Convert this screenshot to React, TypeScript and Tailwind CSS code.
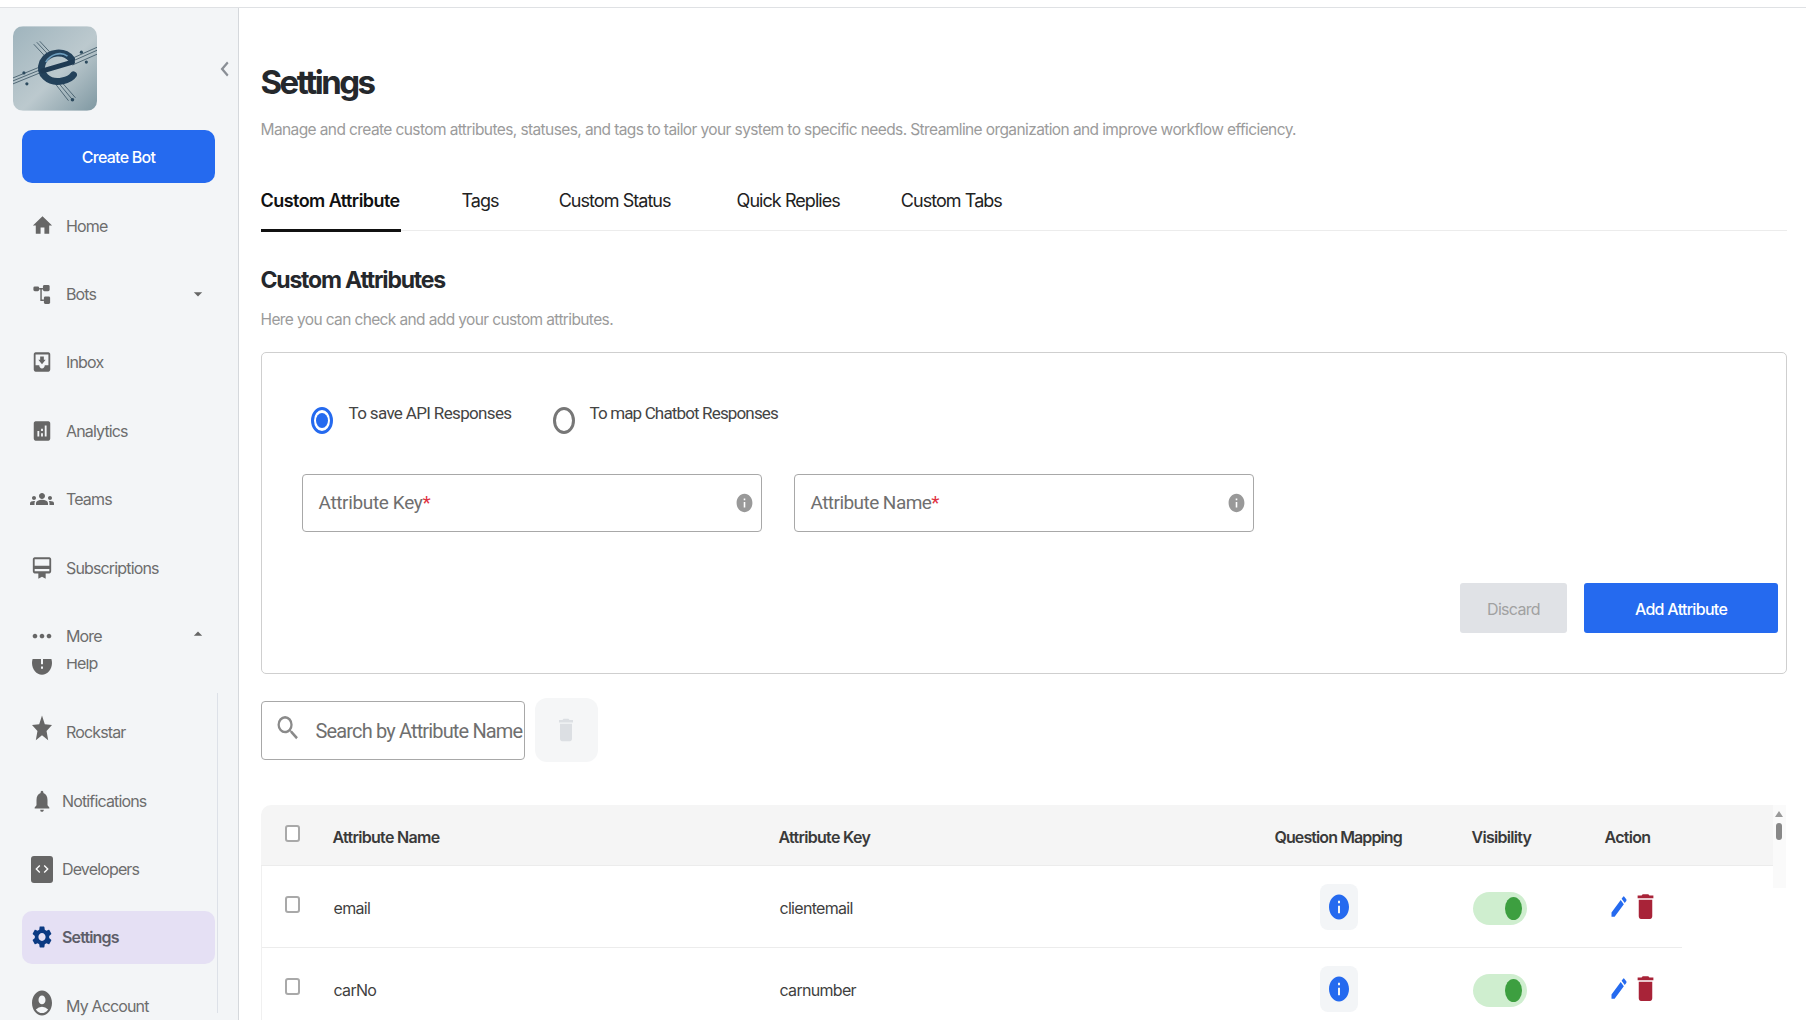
import React from 'react';
import {
  MdHome, MdMoveToInbox, MdAnalytics, MdGroups, MdCardMembership, MdMoreHoriz, MdError,
  MdStar, MdNotifications, MdSettings, MdAccountCircle, MdInfo, MdEdit, MdDelete, MdSearch, MdArrowDropDown,
  MdArrowDropUp, MdChevronLeft, MdCode,
} from 'react-icons/md';

const inter = 'font-["Inter","Liberation_Sans",sans-serif]';

const Logo = () => (
  <svg viewBox="0 0 85 85" className="w-[85px] h-[85px] rounded-[10px]">
    <defs>
      <linearGradient id="bg" x1="0" y1="0" x2="1" y2="1">
        <stop offset="0" stopColor="#9fb4bd" />
        <stop offset="0.55" stopColor="#bcc9ce" />
        <stop offset="1" stopColor="#7f98a2" />
      </linearGradient>
    </defs>
    <rect width="85" height="85" fill="url(#bg)" />
    <g stroke="#36505f" strokeWidth="0.8" fill="none">
      <path d="M24 16 L37 30 M27 15 L40 29 M21 18 L34 32" />
      <path d="M45 56 L60 74 M48 55 L63 72 M42 57 L56 75" />
      <path d="M58 36 L85 24 M58 33 L85 21 M60 39 L85 28" />
      <path d="M0 55 L27 44 M0 52 L27 41 M0 58 L27 47" />
    </g>
    <g fill="#2c4a5e">
      <circle cx="69" cy="26" r="1.6" />
      <circle cx="74" cy="36" r="1.6" />
      <circle cx="11" cy="47" r="1.6" />
      <circle cx="14" cy="58" r="1.6" />
      <circle cx="60" cy="74" r="1.8" />
    </g>
    <path d="M59 33 C52 24 36 25 30 36 C25 48 36 58 50 55 C55 54 59 52 61 49" fill="none" stroke="#23415a" strokeWidth="7" strokeLinecap="round" />
    <path d="M30 45 L60 36" stroke="#1f3a52" strokeWidth="5" strokeLinecap="round" />
    <path d="M55 30 C48 25 38 28 33 36" fill="none" stroke="#6d9dbd" strokeWidth="1.6" />
  </svg>
);

const BotsIcon = () => (
  <svg viewBox="0 0 20 22" className="w-[20px] h-[21px]" fill="#666666" stroke="#666666">
    <rect x="1" y="2.5" width="6" height="5" rx="1.5" stroke="none" />
    <rect x="11" y="1" width="7" height="6.5" rx="1.5" stroke="none" />
    <rect x="12" y="13" width="6.5" height="8" rx="1.5" stroke="none" />
    <path d="M7 5 H11 M9 5 V17 H12" fill="none" strokeWidth="1.5" />
  </svg>
);

type NavItem = {
  label: string;
  icon: React.ComponentType<any>;
  size: string;
  textMl?: string;
};

const upper: NavItem[] = [
  { label: 'Home', icon: MdHome, size: 'w-[23px] h-[25px]' },
  { label: 'Bots', icon: BotsIcon, size: '' },
  { label: 'Inbox', icon: MdMoveToInbox, size: 'w-[22px] h-[26px]' },
  { label: 'Analytics', icon: MdAnalytics, size: 'w-[22px] h-[26px]' },
  { label: 'Teams', icon: MdGroups, size: 'w-[24px] h-[24px]' },
  { label: 'Subscriptions', icon: MdCardMembership, size: 'w-[22px] h-[26px]' },
];

const SideRow = ({ item, right }: { item: NavItem; right?: React.ReactNode }) => {
  const Icon = item.icon;
  return (
    <div className="h-[68.4px] flex items-center pl-[30px] pr-[24px] shrink-0">
      <span className="w-[24px] flex justify-center text-[#666666] shrink-0">
        {item.label === 'Developers' ? (
          <span className="w-[22px] h-[27px] rounded-[3px] bg-[#666666] flex items-center justify-center">
            <MdCode className="w-[16px] h-[16px] text-white" />
          </span>
        ) : item.label === 'Bots' ? (
          <BotsIcon />
        ) : (
          <Icon className={item.size} preserveAspectRatio="none" />
        )}
      </span>
      <span className={`${item.textMl || 'ml-3'} ${inter} text-[16px] tracking-[-0.85px] text-[#6d6d6d]`}>{item.label}</span>
      {right}
    </div>
  );
};

const Sidebar = () => (
  <aside className="w-[239px] shrink-0 h-[1012px] bg-[#f3f5f7] border-r border-[#d5d8dc] flex flex-col overflow-hidden">
    <div className="flex items-center pl-[13px] pt-[18px]">
      <Logo />
      <MdChevronLeft className="ml-[115px] w-[26px] h-[30px] text-[#8a8f96]" preserveAspectRatio="none" />
    </div>
    <button className={`mt-[19px] ml-[22px] mr-[23px] h-[53px] rounded-[10px] bg-[#256aef] text-white text-[16px] font-medium tracking-[-0.75px] ${inter}`}>
      Create Bot
    </button>
    <div className="mt-[8.5px] flex flex-col">
      {upper.map((item) => (
        <SideRow
          key={item.label}
          item={item}
          right={item.label === 'Bots' ? <MdArrowDropDown className="ml-auto w-[20px] h-[20px] text-[#666666] -translate-x-[6px]" /> : undefined}
        />
      ))}
      <div className="h-[57.5px] pt-[12px] shrink-0">
        <div className="h-[44px] flex items-center pl-[30px] pr-[24px]">
          <span className="w-[24px] flex justify-center text-[#666666]">
            <MdMoreHoriz className="w-[28px] h-[28px] shrink-0" />
          </span>
          <span className={`ml-3 ${inter} text-[16px] tracking-[-0.85px] text-[#6d6d6d]`}>More</span>
          <MdArrowDropUp className="ml-auto w-[20px] h-[20px] text-[#666666] -translate-x-[6px] -translate-y-[2px]" />
        </div>
      </div>
    </div>
    <div className="relative flex-1 overflow-hidden">
      <div className="-mt-[30.7px] flex flex-col">
        <div className="mb-[1px]">
          <SideRow item={{ label: 'Help', icon: MdError, size: 'w-[26px] h-[28px]' }} />
        </div>
        <SideRow item={{ label: 'Rockstar', icon: MdStar, size: 'w-[27px] h-[31px] -translate-y-[4px]' }} />
        <SideRow item={{ label: 'Notifications', icon: MdNotifications, size: 'w-[22px] h-[26px]', textMl: 'ml-2' }} />
        <SideRow item={{ label: 'Developers', icon: MdCode, size: '', textMl: 'ml-2' }} />
        <div className="h-[68.4px] flex items-center shrink-0 pl-[22px] pr-[23px]">
          <div className="w-full h-[53px] rounded-[10px] bg-[#e5e0f4] flex items-center pl-[8px]">
            <span className="w-[24px] flex justify-center shrink-0">
              <MdSettings className="w-[25px] h-[26px] text-[#0b3a82]" preserveAspectRatio="none" />
            </span>
            <span className={`ml-2 ${inter} text-[16px] font-semibold tracking-[-0.85px] text-[#5d5d68]`}>Settings</span>
          </div>
        </div>
        <SideRow item={{ label: 'My Account', icon: MdAccountCircle, size: 'w-[26px] h-[30px] -translate-y-[3px]' }} />
      </div>
      <div className="absolute left-[217px] top-[34px] bottom-[7px] w-px bg-[#dde1e8]" />
    </div>
  </aside>
);

const tabs = [
  { label: 'Custom Attribute', cls: 'w-[140px] font-semibold text-[#111111] border-b-[3px] border-[#111111] tracking-[-0.55px]' },
  { label: 'Tags', cls: 'ml-[61px] text-[#222222] tracking-[-0.95px]' },
  { label: 'Custom Status', cls: 'ml-[60px] text-[#222222] tracking-[-0.95px]' },
  { label: 'Quick Replies', cls: 'ml-[66px] text-[#222222] tracking-[-0.95px]' },
  { label: 'Custom Tabs', cls: 'ml-[61px] text-[#222222] tracking-[-0.95px]' },
];

const Field = ({ label, tracking }: { label: string; tracking: string }) => (
  <div className="w-[460px] h-[58px] border border-[#a8a8a8] rounded-[4px] flex items-center pl-[16px] pr-[7px] font-['Roboto',sans-serif] text-[19px] text-[#6f6f6f]">
    <span className={`pt-[1px] ${tracking}`}>
      {label}
      <span className="text-[#e0313f]">*</span>
    </span>
    <MdInfo className="ml-auto w-[19px] h-[22px] text-[#999999]" preserveAspectRatio="none" />
  </div>
);

const Radio = ({ label, checked, textCls }: { label: string; checked?: boolean; textCls: string }) => (
  <div className="flex items-start">
    <span
      className={`w-[22px] h-[27px] rounded-[50%] border-[3px] flex items-center justify-center mt-[6px] ${
        checked ? 'border-[#256aef]' : 'border-[#777777]'
      }`}
    >
      {checked && <span className="w-[12px] h-[15px] rounded-[50%] bg-[#256aef]" />}
    </span>
    <span className={`font-['Roboto',sans-serif] text-[17px] text-[#444444] leading-[24px] ${textCls}`}>{label}</span>
  </div>
);

const rows = [
  { name: 'email', key: 'clientemail', h: 'h-[82px]' },
  { name: 'carNo', key: 'carnumber', h: 'h-[81px]' },
];

const colNames = 'grid grid-cols-[72px_446px_496px_197px_133px_1fr] items-center';

const Checkbox = () => <span className="block w-[15px] h-[17px] rounded-[3px] border-2 border-[#a9a9a9] bg-white" />;

const Main = () => (
  <main className="flex-1 h-[1012px] overflow-hidden pl-[21.5px] pr-[19px]">
    <h1 className={`mt-[46px] text-[33px] leading-[56px] font-bold tracking-[-2.5px] text-[#25282c] ${inter}`}>Settings</h1>
    <p className={`mt-[6.5px] text-[15.5px] leading-[26px] tracking-[-0.6px] text-[#9b9b9b] ${inter}`}>
      Manage and create custom attributes, statuses, and tags to tailor your system to specific needs. Streamline organization and improve workflow efficiency.
    </p>
    <div className={`mt-[38.5px] flex border-b border-[#ececec] h-[50px] text-[18px] leading-[40px] ${inter}`}>
      {tabs.map((t) => (
        <div key={t.label} className={`h-[51px] whitespace-nowrap ${t.cls}`}>
          {t.label}
        </div>
      ))}
    </div>
    <h2 className={`mt-[33px] text-[23px] leading-[32px] font-bold tracking-[-1.2px] text-[#25282c] ${inter}`}>Custom Attributes</h2>
    <p className={`mt-[12px] text-[15.5px] leading-[24px] tracking-[-0.62px] text-[#9b9b9b] ${inter}`}>Here you can check and add your custom attributes.</p>

    <section className="mt-[20px] h-[322px] border border-[#cfcfcf] rounded-[5px] flex flex-col pl-[40px] pr-[8px]">
      <div className="mt-[48px] ml-[9px] flex gap-[42px]">
        <Radio label="To save API Responses" checked textCls="ml-[16px] tracking-[-0.65px]" />
        <Radio label="To map Chatbot Responses" textCls="ml-[14px] tracking-[-0.85px]" />
      </div>
      <div className="mt-[40px] flex gap-[32px]">
        <Field label="Attribute Key" tracking="tracking-[-0.35px]" />
        <Field label="Attribute Name" tracking="tracking-[-0.55px]" />
      </div>
      <div className={`mt-[51px] flex justify-end gap-[17px] text-[16px] tracking-[-0.7px] ${inter}`}>
        <button className="w-[107px] h-[50px] pt-[1px] rounded-[3px] bg-[#e0e2e6] text-[#a1a1a1]">Discard</button>
        <button className="w-[194px] h-[50px] pt-[1px] rounded-[3px] bg-[#256aef] text-white font-medium">Add Attribute</button>
      </div>
    </section>

    <div className="mt-[24px] flex items-center gap-[10px]">
      <div className="w-[264px] h-[59px] border border-[#a8a8a8] rounded-[4px] flex items-center pl-[12px] font-['Roboto',sans-serif] text-[20px] text-[#6f6f6f] overflow-hidden whitespace-nowrap">
        <MdSearch className="w-[28px] h-[32px] text-[#8a8a8a] shrink-0 -mt-[4px]" preserveAspectRatio="none" />
        <span className="ml-[14px] pt-[1px] tracking-[-0.85px]">Search by Attribute Name</span>
      </div>
      <div className="w-[63px] h-[64px] rounded-[12px] bg-[#f5f6f7] flex items-center justify-center">
        <MdDelete className="w-[24px] h-[30px] text-[#dcdfe3]" preserveAspectRatio="none" />
      </div>
    </div>

    <div className="mt-[43px] flex">
      <div className="w-[1512px] shrink-0">
        <div className={`${colNames} h-[61px] bg-[#f5f5f5] rounded-tl-[10px] border-b border-[#ececec] ${inter} text-[16px] font-semibold tracking-[-0.7px] text-[#3a3a3a]`}>
          <span className="pl-[24px] -mt-[3px]"><Checkbox /></span>
          <span className="pt-[3px]">Attribute Name</span>
          <span className="pt-[3px]">Attribute Key</span>
          <span className="pt-[3px] tracking-[-0.9px]">Question Mapping</span>
          <span className="pt-[3px]">Visibility</span>
          <span className="pt-[3px]">Action</span>
        </div>
        <div className="w-[1421px] border-l border-[#f0f0f0]">
          {rows.map((r, i) => (
            <div key={r.name} className={`${colNames} ${r.h} ${i === 0 ? 'border-b border-[#ececec]' : ''} ${inter} text-[16px] tracking-[-0.7px] text-[#3f3f3f]`}>
              <span className="pl-[23px] -mt-[4px]"><Checkbox /></span>
              <span className="pt-[2px]">{r.name}</span>
              <span className="pt-[2px]">{r.key}</span>
              <span className="pl-[44px]">
                <span className="w-[38px] h-[46px] rounded-[8px] bg-[#f3f5f7] flex items-center justify-center">
                  <MdInfo className="w-[24px] h-[30px] text-[#256aef]" preserveAspectRatio="none" />
                </span>
              </span>
              <span>
                <span className="relative block w-[54px] h-[33px] rounded-full bg-[#cfeecf] translate-y-[2px]">
                  <span className="absolute right-[5px] top-[5px] w-[17px] h-[23px] rounded-[50%] bg-[#3d9f40]" />
                </span>
              </span>
              <span className="flex items-center pl-[3px]">
                <MdEdit className="w-[20px] h-[27px] text-[#256aef]" preserveAspectRatio="none" />
                <MdDelete className="ml-[3px] w-[27px] h-[33px] text-[#a82338]" preserveAspectRatio="none" />
              </span>
            </div>
          ))}
        </div>
      </div>
      <div className="w-[13px] h-[83px] bg-[#fafafa] flex flex-col items-center pt-[6px]">
        <span className="w-0 h-0 border-x-[4px] border-x-transparent border-b-[6px] border-b-[#999999]" />
        <span className="mt-[6px] w-[6px] h-[17px] rounded-full bg-[#888888]" />
      </div>
    </div>
  </main>
);

export default function App() {
  return (
    <div className="w-[1806px] h-[1020px] overflow-hidden bg-white">
      <div className="h-[8px] border-b border-[#dfe1e4]" />
      <div className="flex">
        <Sidebar />
        <Main />
      </div>
    </div>
  );
}
